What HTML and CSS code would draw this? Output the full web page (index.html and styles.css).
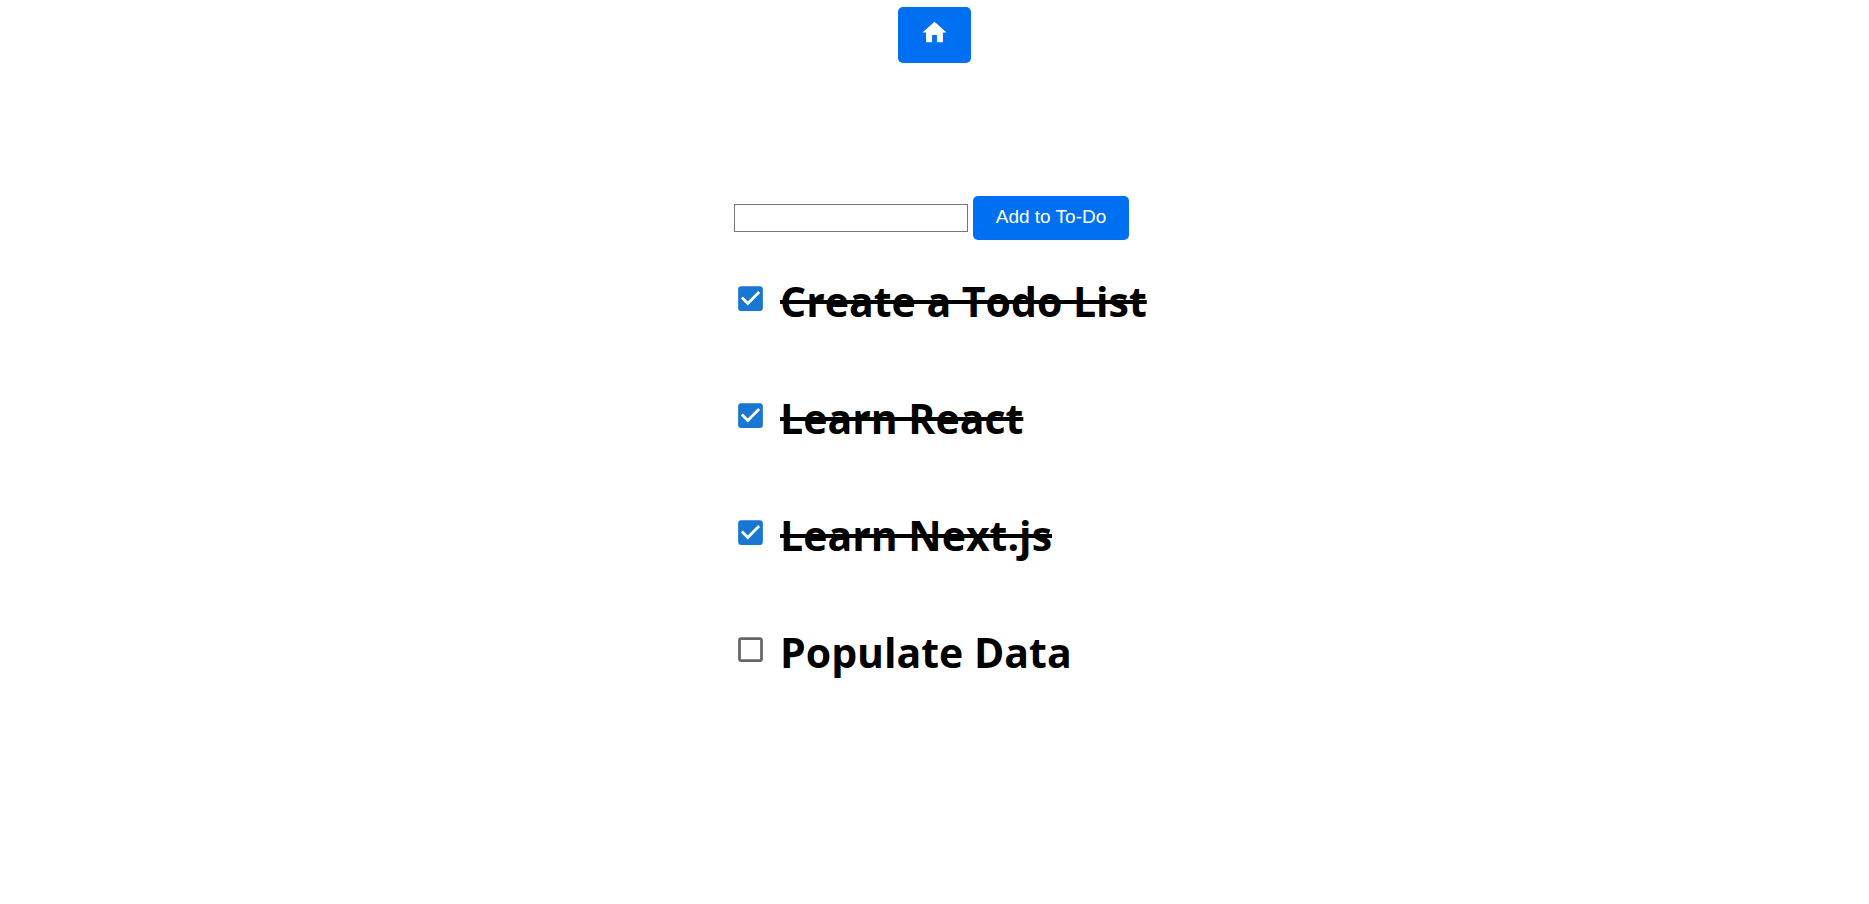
FILE: index.html
```
<!DOCTYPE html>
<html lang="en">
<head>
<meta charset="utf-8">
<title>To-Do</title>
<link rel="stylesheet" href="styles.css">
</head>
<body>
<nav class="nav">
  <button class="button home" type="button" aria-label="Home">
    <svg class="home-icon" viewBox="0 0 24 24" aria-hidden="true"><path d="M10 20v-6h4v6h5v-8h3L12 3 2 12h3v8z"/></svg>
  </button>
</nav>
<main class="todo">
  <form class="form">
    <input class="field" type="text" aria-label="New to-do">
    <button class="button add" type="button">Add to To-Do</button>
  </form>
  <ul class="list">
    <li><label class="item"><input class="check" type="checkbox" checked><svg class="box" viewBox="0 0 24 24" aria-hidden="true"><path class="on" d="M19 3H5c-1.11 0-2 .9-2 2v14c0 1.1.89 2 2 2h14c1.11 0 2-.9 2-2V5c0-1.1-.89-2-2-2zm-9 14l-5-5 1.41-1.41L10 14.17l7.59-7.59L19 8l-9 9z"/><path class="off" d="M19 5v14H5V5h14m0-2H5c-1.1 0-2 .9-2 2v14c0 1.1.9 2 2 2h14c1.1 0 2-.9 2-2V5c0-1.1-.9-2-2-2z"/></svg><span class="name">Create a Todo List</span></label></li>
    <li><label class="item"><input class="check" type="checkbox" checked><svg class="box" viewBox="0 0 24 24" aria-hidden="true"><path class="on" d="M19 3H5c-1.11 0-2 .9-2 2v14c0 1.1.89 2 2 2h14c1.11 0 2-.9 2-2V5c0-1.1-.89-2-2-2zm-9 14l-5-5 1.41-1.41L10 14.17l7.59-7.59L19 8l-9 9z"/><path class="off" d="M19 5v14H5V5h14m0-2H5c-1.1 0-2 .9-2 2v14c0 1.1.9 2 2 2h14c1.1 0 2-.9 2-2V5c0-1.1-.9-2-2-2z"/></svg><span class="name">Learn React</span></label></li>
    <li><label class="item"><input class="check" type="checkbox" checked><svg class="box" viewBox="0 0 24 24" aria-hidden="true"><path class="on" d="M19 3H5c-1.11 0-2 .9-2 2v14c0 1.1.89 2 2 2h14c1.11 0 2-.9 2-2V5c0-1.1-.89-2-2-2zm-9 14l-5-5 1.41-1.41L10 14.17l7.59-7.59L19 8l-9 9z"/><path class="off" d="M19 5v14H5V5h14m0-2H5c-1.1 0-2 .9-2 2v14c0 1.1.9 2 2 2h14c1.1 0 2-.9 2-2V5c0-1.1-.9-2-2-2z"/></svg><span class="name">Learn Next.js</span></label></li>
    <li><label class="item"><input class="check" type="checkbox"><svg class="box" viewBox="0 0 24 24" aria-hidden="true"><path class="on" d="M19 3H5c-1.11 0-2 .9-2 2v14c0 1.1.89 2 2 2h14c1.11 0 2-.9 2-2V5c0-1.1-.89-2-2-2zm-9 14l-5-5 1.41-1.41L10 14.17l7.59-7.59L19 8l-9 9z"/><path class="off" d="M19 5v14H5V5h14m0-2H5c-1.1 0-2 .9-2 2v14c0 1.1.9 2 2 2h14c1.1 0 2-.9 2-2V5c0-1.1-.9-2-2-2z"/></svg><span class="name">Populate Data</span></label></li>
  </ul>
</main>
</body>
</html>
```
FILE: styles.css
```
* {
  box-sizing: border-box;
}

body {
  margin: 0;
  background: #fff;
  color: #000;
  font-family: "Segoe UI", "Open Sans", "Noto Sans", sans-serif;
}

.nav {
  display: flex;
  justify-content: center;
  padding-top: 7px;
}

.button {
  border: 0;
  border-radius: 5px;
  background: #0070f3;
  color: #fff;
  font: 19px/22px "Liberation Sans", Arial, sans-serif;
  cursor: pointer;
}

.home {
  padding: 11px 22px 16px;
}

.home-icon {
  display: block;
  width: 29px;
  height: 29px;
  fill: currentColor;
}

.todo {
  width: 401px;
  max-width: 100%;
  margin: 133px auto 0;
}

.form {
  display: flex;
  align-items: center;
  gap: 5px;
}

.field {
  width: 234px;
  height: 28px;
  border: 1px solid #767676;
  padding: 1px 2px;
  background: #fff;
  font: 18px "Liberation Sans", Arial, sans-serif;
}

.add {
  padding: 10px 22px 12px;
  min-width: 156px;
  white-space: nowrap;
}

.list {
  margin: 0;
  padding: 0;
  list-style: none;
}

.item {
  display: flex;
  align-items: center;
  gap: 13px;
  height: 117px;
  position: relative;
  cursor: pointer;
}

.check {
  position: absolute;
  width: 33px;
  height: 33px;
  margin: 0;
  opacity: 0;
}

.box {
  flex: none;
  width: 33px;
  height: 33px;
  fill: #666;
}

.on {
  display: none;
}

.check:checked + .box {
  fill: #1976d2;
}

.check:checked + .box .on {
  display: inline;
}

.check:checked + .box .off {
  display: none;
}

.name {
  padding-top: 4px;
  font-size: 41px;
  line-height: 60px;
  font-weight: 700;
  white-space: nowrap;
}

.check:checked ~ .name {
  text-decoration: line-through;
  text-decoration-thickness: 4px;
}
```
